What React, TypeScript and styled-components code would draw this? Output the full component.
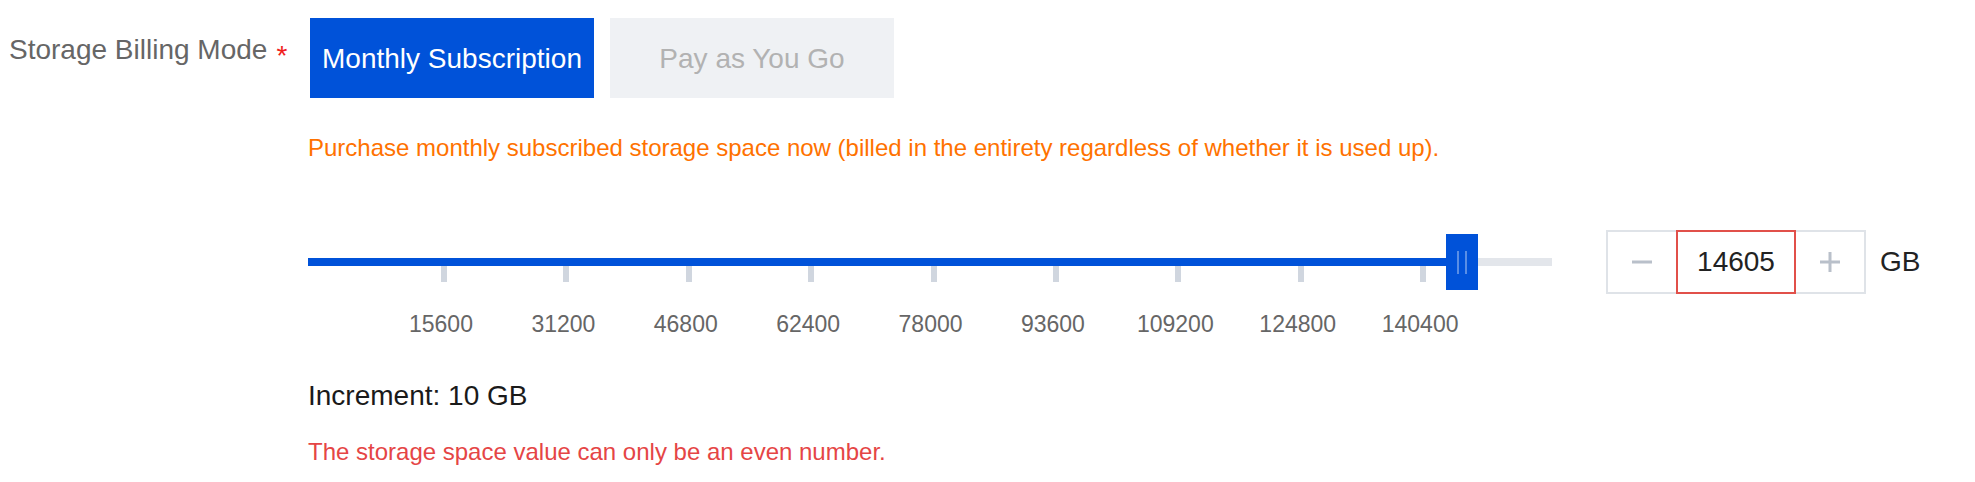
import { useState } from 'react';
import styled, { createGlobalStyle } from 'styled-components';

const GlobalStyle = createGlobalStyle`
  html, body {
    margin: 0;
    padding: 0;
    background: #ffffff;
    font-family: "Liberation Sans", Arial, sans-serif;
  }
`;

const Page = styled.div`
  padding-top: 18px;
  height: 482px;
  box-sizing: border-box;
`;

const FormRow = styled.div`
  display: flex;
  align-items: flex-start;
`;

const LabelCol = styled.div`
  width: 308px;
  flex-shrink: 0;
  box-sizing: border-box;
  padding: 16px 0 0 9px;
`;

const Label = styled.label`
  font-size: 28px;
  line-height: 32px;
  color: #666666;
  white-space: nowrap;
`;

const Required = styled.span`
  color: #f01d1d;
  font-size: 28px;
  margin-left: 9px;
  vertical-align: -6px;
`;

const Content = styled.div`
  display: flex;
  flex-direction: column;
`;

const ModeGroup = styled.div`
  display: flex;
  gap: 16px;
  margin-left: 2px;
`;

const ModeButton = styled.button<{ $active: boolean }>`
  width: 284px;
  height: 80px;
  padding: 2px 0 0;
  border: none;
  border-radius: 0;
  font-family: inherit;
  font-size: 28px;
  line-height: 32px;
  display: flex;
  align-items: center;
  justify-content: center;
  cursor: pointer;
  background: ${({ $active }) => ($active ? '#0052d9' : '#eff1f4')};
  color: ${({ $active }) => ($active ? '#ffffff' : '#b2b2b2')};
`;

const Hint = styled.p<{ $tone: 'warn' | 'error' }>`
  margin: 0;
  font-size: 24px;
  line-height: 32px;
  color: ${({ $tone }) => ($tone === 'warn' ? '#ff7200' : '#e54545')};
`;

const WarnHint = styled(Hint)`
  margin-top: 34px;
`;

const ErrorHint = styled(Hint)`
  margin-top: 24px;
`;

const SliderRow = styled.div`
  display: flex;
  align-items: flex-start;
  margin-top: 66px;
`;

const SliderArea = styled.div`
  width: 1244px;
  display: flex;
  flex-direction: column;
`;

const TrackWrap = styled.div`
  padding-top: 28px;
`;

const Track = styled.div`
  position: relative;
  height: 8px;
  background: #e3e6eb;
`;

const TrackFill = styled.div`
  height: 100%;
  background: #0052d9;
`;

const Handle = styled.div`
  position: absolute;
  top: -24px;
  width: 32px;
  height: 56px;
  background: #0052d9;
  display: flex;
  align-items: center;
  justify-content: center;
  gap: 6px;
  cursor: grab;
`;

const Grip = styled.span`
  width: 2px;
  height: 23px;
  background: rgba(255, 255, 255, 0.35);
`;

const TickGrid = styled.div`
  display: grid;
  grid-template-columns: repeat(9, 122.4px);
  padding-left: 74.8px;
`;

const TickCell = styled.div`
  display: flex;
  flex-direction: column;
  align-items: center;
`;

const TickMark = styled.span`
  width: 6px;
  height: 16px;
  background: #d0d6df;
`;

const TickLabel = styled.span`
  margin: 28px 6px 0 0;
  font-size: 23px;
  line-height: 28px;
  color: #666666;
`;

const Stepper = styled.div`
  display: flex;
  margin-left: 54px;
  height: 64px;
`;

const StepButton = styled.button<{ $side: 'left' | 'right' }>`
  width: 70px;
  height: 64px;
  box-sizing: border-box;
  padding: 0;
  background: #ffffff;
  border: 2px solid #dfe3e8;
  ${({ $side }) => ($side === 'left' ? 'border-right: none;' : 'border-left: none;')}
  display: flex;
  align-items: center;
  justify-content: center;
  cursor: pointer;
`;

const AmountInput = styled.input`
  width: 120px;
  height: 64px;
  box-sizing: border-box;
  border: 2px solid #e1504a;
  border-radius: 0;
  outline: none;
  padding: 0;
  text-align: center;
  font-family: inherit;
  font-size: 28px;
  line-height: 32px;
  color: #222222;
  background: #ffffff;
`;

const Unit = styled.span`
  margin-left: 14px;
  font-size: 28px;
  line-height: 64px;
  color: #222222;
`;

const Increment = styled.p`
  margin: 42px 0 0;
  font-size: 28px;
  line-height: 32px;
  color: #1a1a1a;
`;

const ticks = [15600, 31200, 46800, 62400, 78000, 93600, 109200, 124800, 140400];

// pixel offset of the handle's left edge along the track
const HANDLE_LEFT = 1138;

export default function App() {
  const [mode, setMode] = useState<'monthly' | 'payg'>('monthly');
  const [amount, setAmount] = useState('14605');

  return (
    <Page>
      <GlobalStyle />
      <FormRow>
        <LabelCol>
          <Label>
            Storage Billing Mode<Required>*</Required>
          </Label>
        </LabelCol>
        <Content>
          <ModeGroup>
            <ModeButton $active={mode === 'monthly'} onClick={() => setMode('monthly')}>
              Monthly Subscription
            </ModeButton>
            <ModeButton $active={mode === 'payg'} onClick={() => setMode('payg')}>
              Pay as You Go
            </ModeButton>
          </ModeGroup>

          <WarnHint $tone="warn">
            Purchase monthly subscribed storage space now (billed in the entirety regardless of whether it is used up).
          </WarnHint>

          <SliderRow>
            <SliderArea>
              <TrackWrap>
                <Track>
                  <TrackFill style={{ width: HANDLE_LEFT }} />
                  <Handle style={{ left: HANDLE_LEFT }}>
                    <Grip />
                    <Grip />
                  </Handle>
                </Track>
              </TrackWrap>
              <TickGrid>
                {ticks.map((t) => (
                  <TickCell key={t}>
                    <TickMark />
                    <TickLabel>{t}</TickLabel>
                  </TickCell>
                ))}
              </TickGrid>
            </SliderArea>

            <Stepper>
              <StepButton $side="left" aria-label="decrease">
                <svg width="20" height="20" viewBox="0 0 20 20">
                  <rect x="0" y="8.5" width="20" height="3" fill="#b9c0ca" />
                </svg>
              </StepButton>
              <AmountInput value={amount} onChange={(e) => setAmount(e.target.value)} />
              <StepButton $side="right" aria-label="increase">
                <svg width="20" height="20" viewBox="0 0 20 20">
                  <rect x="0" y="8.5" width="20" height="3" fill="#b9c0ca" />
                  <rect x="8.5" y="0" width="3" height="20" fill="#b9c0ca" />
                </svg>
              </StepButton>
            </Stepper>
            <Unit>GB</Unit>
          </SliderRow>

          <Increment>Increment: 10 GB</Increment>
          <ErrorHint $tone="error">The storage space value can only be an even number.</ErrorHint>
        </Content>
      </FormRow>
    </Page>
  );
}
